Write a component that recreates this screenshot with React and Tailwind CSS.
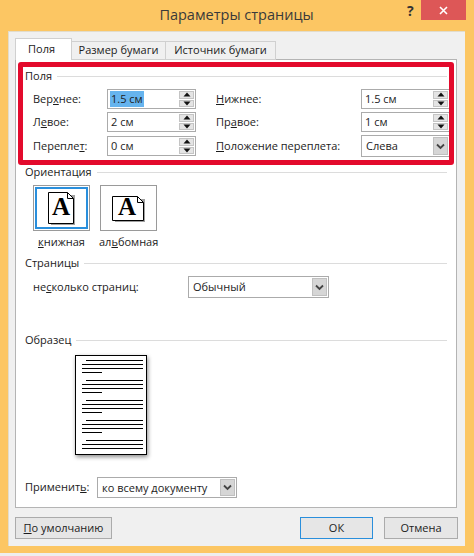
const U = ({ children }) => <span className="underline">{children}</span>;

function Header({ children, className = "" }) {
  return (
    <div className={`flex items-center h-[16px] pl-[9px] pr-[9px] gap-[5px] ${className}`}>
      <span className="leading-[16px]">{children}</span>
      <span className="flex-1 h-px bg-[#dcdcdc]" />
    </div>
  );
}

function Tri({ up }) {
  return (
    <svg width="8" height="5" viewBox="0 0 8 5">
      <path d={up ? "M4 0.5L7.5 4.5H0.5Z" : "M4 4.5L7.5 0.5H0.5Z"} fill="#111" />
    </svg>
  );
}

function Spin({ value, selected }) {
  return (
    <div className="flex items-center w-[89px] h-[20px] border border-[#ababab] bg-white pl-[2px] pr-[1px]">
      <span className={`flex-1 leading-[16px] ${selected ? "" : "pl-[1px]"}`}>
        <span className={selected ? "bg-[#66b4ee] px-[1px] pb-[1px]" : ""}>{value}</span>
      </span>
      <div className="flex flex-col w-[15px] h-[16px] gap-px">
        <div className="flex-1 flex items-center justify-center bg-[#e4e4e4] border border-[#c4c4c4]">
          <Tri up />
        </div>
        <div className="flex-1 flex items-center justify-center bg-[#e4e4e4] border border-[#c4c4c4]">
          <Tri />
        </div>
      </div>
    </div>
  );
}

function Select({ value, className = "" }) {
  return (
    <div className={`flex items-center border border-[#ababab] bg-white p-px ${className}`}>
      <span className="flex-1 pl-[3px] leading-[16px]">{value}</span>
      <div className="w-[15px] self-stretch flex items-center justify-center bg-[#d6d6d6] border border-[#c0c0c0]">
        <svg width="9" height="7" viewBox="0 0 9 7">
          <path d="M1 1.5L4.5 5L8 1.5" fill="none" stroke="#444" strokeWidth="1.8" />
        </svg>
      </div>
    </div>
  );
}

function PortraitIcon() {
  return (
    <svg width="28" height="34" viewBox="0 0 28 34" className="overflow-visible mt-[1px]">
      <path d="M3 3H27V33H3Z" fill="#a0a0a0" />
      <path d="M0.5 0.5H19.5L25.5 6.5V31.5H0.5Z" fill="#fff" stroke="#000" />
      <path d="M19.5 0.5V6.5H25.5" fill="none" stroke="#000" />
      <text x="13" y="23" textAnchor="middle" fontFamily="'Liberation Serif', serif" fontWeight="700" fontSize="25" fill="#000">A</text>
    </svg>
  );
}

function LandscapeIcon() {
  return (
    <svg width="34" height="26" viewBox="0 0 34 26" className="overflow-visible mt-[1px]">
      <path d="M3 3H33V26H3Z" fill="#a0a0a0" />
      <path d="M0.5 0.5H25.5L31.5 6.5V24.5H0.5Z" fill="#fff" stroke="#000" />
      <path d="M25.5 0.5V6.5H31.5" fill="none" stroke="#000" />
      <text x="15" y="18.5" textAnchor="middle" fontFamily="'Liberation Serif', serif" fontWeight="700" fontSize="25" fill="#000">A</text>
    </svg>
  );
}

function Preview() {
  const groups = [0, 20, 40, 60, 80];
  return (
    <svg width="72" height="100" viewBox="0 0 72 100" className="overflow-visible drop-shadow-[1px_2px_2px_rgba(0,0,0,0.45)]">
      <rect x="0.5" y="0.5" width="71" height="99" fill="#fff" stroke="#000" />
      {groups.map((g) => (
        <g key={g} stroke="#000">
          <path d={`M11 ${g + 5.5}H68`} />
          <path d={`M7 ${g + 9.5}H68`} />
          <path d={`M7 ${g + 13.5}H68`} />
          {g < 80 && <path d={`M7 ${g + 17.5}H27`} />}
        </g>
      ))}
    </svg>
  );
}

function Btn({ children, className = "" }) {
  return (
    <div className={`flex items-center justify-center h-[22px] border bg-[#e6e6e6] ${className}`}>
      {children}
    </div>
  );
}

export default function App() {
  return (
    <div
      className="w-[474px] h-[556px] bg-[#eeeeee] text-[#1c1c1c] text-[11px] overflow-hidden"
      style={{ fontFamily: "'Open Sans', 'Noto Sans', sans-serif" }}
    >
      <div className="h-[553px] bg-[#fcc663] flex flex-col">
        <div className="relative h-[31px] flex items-center justify-center shrink-0">
          <span className="text-[14.5px] text-[#3a3a3a] pb-[1px] ml-[-1px]">Параметры страницы</span>
          <span className="absolute left-[407px] top-[1px] text-[14px] font-bold text-[#333] leading-[20px]">?</span>
          <div className="absolute left-[421px] top-0 w-[45px] h-[20px] bg-[#dd5757] flex items-center justify-center text-white">
            <svg width="9" height="9" viewBox="0 0 9 9">
              <path d="M1 1L8 8M8 1L1 8" stroke="#fff" strokeWidth="1.6" />
            </svg>
          </div>
        </div>

        <div className="relative mx-[8px] mb-[7px] w-[457px] h-[515px] bg-[#f0f0f0] border-t border-l border-[#e2dccb] pt-[6px] pl-[6px] box-border">
          <div className="flex items-end h-[22px] relative z-10">
            <div className="w-[57px] h-[22px] bg-white border border-b-0 border-[#d0d0d0] flex items-center pl-[12px]">Поля</div>
            <div className="w-[94px] h-[19px] bg-[#f0f0f0] border border-l-0 border-[#d0d0d0] flex items-center justify-center">Размер бумаги</div>
            <div className="w-[110px] h-[19px] bg-[#f0f0f0] border border-l-0 border-[#d0d0d0] flex items-center justify-center">Источник бумаги</div>
          </div>

          <div className="w-[442px] h-[449px] -mt-px bg-white border border-[#b4b4b4] pt-[8px]">
            <Header>Поля</Header>
            <div className="mt-[5px] pl-[17px] flex flex-col">
              <div className="flex items-center h-[20px]">
                <span className="w-[74px]">Вер<U>х</U>нее:</span>
                <Spin value="1.5 см" selected />
                <span className="ml-[20px] w-[145px]"><U>Н</U>ижнее:</span>
                <Spin value="1.5 см" />
              </div>
              <div className="flex items-center h-[20px] mt-[3px]">
                <span className="w-[74px]">Л<U>е</U>вое:</span>
                <Spin value="2 см" />
                <span className="ml-[20px] w-[145px]">Пр<U>а</U>вое:</span>
                <Spin value="1 см" />
              </div>
              <div className="flex items-center h-[22px] mt-[3px]">
                <span className="w-[74px]">Перепле<U>т</U>:</span>
                <Spin value="0 см" />
                <span className="ml-[20px] w-[145px]"><U>П</U>оложение переплета:</span>
                <Select value="Слева" className="w-[89px] h-[22px]" />
              </div>
            </div>

            <Header className="mt-[7px]">Ориентация</Header>
            <div className="flex pl-[17px] mt-[5px] gap-[10px]">
              <div className="w-[57px] h-[46px] border border-[#9a9a9a] p-px">
                <div className="w-full h-full border-2 border-[#2a8fdc] flex items-center justify-center">
                  <PortraitIcon />
                </div>
              </div>
              <div className="w-[57px] h-[46px] border border-[#9a9a9a] flex items-center justify-center">
                <LandscapeIcon />
              </div>
            </div>
            <div className="flex pl-[17px] mt-[3px] h-[16px] leading-[16px]">
              <span className="w-[66px] pl-[5px]"><U>к</U>нижная</span>
              <span>ал<U>ь</U>бомная</span>
            </div>

            <Header className="mt-[5px]">Страницы</Header>
            <div className="flex items-center pl-[17px] mt-[5px] h-[22px]">
              <span className="w-[155px]">не<U>с</U>колько страниц:</span>
              <Select value="Обычный" className="w-[141px] h-[22px]" />
            </div>

            <Header className="mt-[34px]">Образец</Header>
            <div className="pl-[59px] mt-[7px] h-[100px]">
              <Preview />
            </div>

            <div className="flex items-center pl-[9px] mt-[22px] h-[21px]">
              <span className="w-[72px]">Применит<U>ь</U>:</span>
              <Select value="ко всему документу" className="w-[140px] h-[21px]" />
            </div>
          </div>

          <div className="flex items-start mt-[9px]">
            <Btn className="w-[97px] border-[#ababab]"><span><U>П</U>о умолчанию</span></Btn>
            <Btn className="ml-[188px] w-[73px] border-[#2a8fdc]">ОК</Btn>
            <Btn className="ml-[11px] w-[74px] border-[#ababab]">Отмена</Btn>
          </div>

          <div className="absolute left-[9px] top-[30px] w-[436px] h-[103px] border-[5px] border-[#e30a2c] rounded-[3px]" />
        </div>
      </div>
    </div>
  );
}
